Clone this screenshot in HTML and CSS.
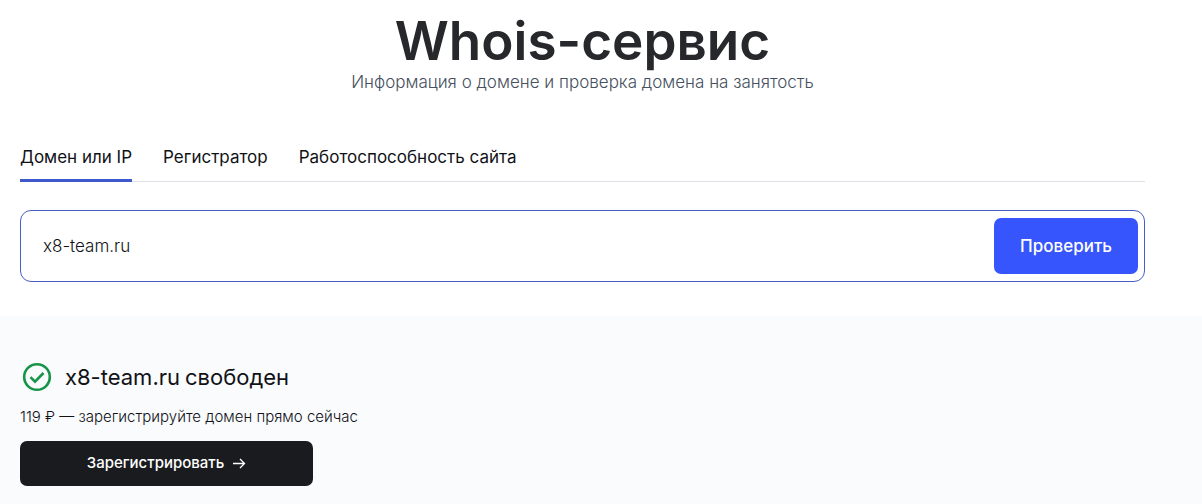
FILE: index.html
```html
<!DOCTYPE html>
<html lang="ru">
<head>
    <meta charset="UTF-8">
    <meta name="viewport" content="width=device-width, initial-scale=1.0">
    <title>Whois-сервис</title>
    <link rel="stylesheet" href="styles.css">
</head>
<body>
    <header class="intro">
        <h1>Whois-сервис</h1>
        <p>Информация о домене и проверка домена на занятость</p>
    </header>
    <main>
        <section class="lookup">
            <nav class="tabs">
                <a href="#domain" class="tab active">Домен или IP</a>
                <a href="#registrar" class="tab">Регистратор</a>
                <a href="#status" class="tab">Работоспособность сайта</a>
            </nav>
            <form class="search">
                <input type="text" class="search-input" name="domain" value="x8-team.ru" aria-label="Домен или IP">
                <button type="submit" class="search-button">Проверить</button>
            </form>
        </section>
        <section class="result">
            <h2 class="result-title">
                <svg class="icon-check" viewBox="0 0 30 30" fill="none" stroke="currentColor" stroke-width="2.6">
                    <circle cx="15" cy="15" r="12.8"/>
                    <path d="M8.500 15.200l4.500 4.500L21.500 11"/>
                </svg>
                <span>x8-team.ru</span>
                <span class="result-state">свободен</span>
            </h2>
            <p class="result-price">119 ₽ — зарегистрируйте домен прямо сейчас</p>
            <button type="button" class="register">
                Зарегистрировать
                <svg class="icon-arrow" viewBox="0 0 14 14" fill="none" stroke="currentColor" stroke-width="1.300">
                    <path d="M1 7.500h11.500M8 3l4.500 4.500L8 12"/>
                </svg>
            </button>
        </section>
    </main>
</body>
</html>
```
FILE: styles.css
```css
* {
    box-sizing: border-box;
}

body {
    margin: 0;
    min-height: 100vh;
    display: flex;
    flex-direction: column;
    background-color: #fff;
    color: #111216;
    font-family: Inter, "Liberation Sans", sans-serif;
}

h1, h2, p {
    margin: 0;
    font-weight: 400;
}

main {
    flex: 1;
    display: flex;
    flex-direction: column;
}

.intro {
    padding: 10px 57px 0 20px;
    text-align: center;
}

.intro h1 {
    font-size: 53px;
    line-height: 62px;
    font-weight: 600;
    color: #27282b;
}

.intro p {
    font-size: 17px;
    line-height: 20px;
    font-weight: 300;
    color: #465060;
}

.lookup {
    padding: 44px 57px 34px 20px;
}

.tabs {
    display: flex;
    gap: 31px;
    border-bottom: 1px solid #dfe0e5;
}

.tab {
    padding: 9px 0 10px;
    margin-bottom: -1px;
    border-bottom: 3px solid transparent;
    font-size: 17px;
    line-height: 24px;
    color: inherit;
    text-decoration: none;
}

.tab.active {
    border-bottom-color: #3f58cc;
}

.search {
    display: flex;
    margin-top: 28px;
    padding: 7px 6px 7px 22px;
    border: 1px solid #4a5cc5;
    border-radius: 11px;
}

.search-input {
    flex: 1;
    min-width: 0;
    padding: 0;
    border: 0;
    outline: 0;
    background: none;
    color: inherit;
    font: inherit;
    font-size: 17px;
    font-weight: 300;
}

.search-button {
    height: 56px;
    padding: 0 26px;
    border: 0;
    border-radius: 7px;
    background-color: #3655fd;
    color: #fff;
    font: inherit;
    font-size: 17px;
    font-weight: 500;
    cursor: pointer;
}

.result {
    flex: 1;
    padding: 45px 20px 18px;
    background-color: #f9fbfd;
}

.result-title {
    display: flex;
    align-items: center;
    gap: 5px;
    font-size: 22px;
    line-height: 32px;
}

.icon-check {
    width: 30px;
    height: 30px;
    margin: 0 8px 0 2px;
    color: #169447;
}

.result-price {
    margin-top: 14px;
    font-size: 15px;
    line-height: 20px;
    font-weight: 300;
}

.register {
    display: flex;
    align-items: center;
    justify-content: center;
    gap: 8px;
    width: 293px;
    height: 45px;
    margin-top: 14px;
    padding: 0 0 2px;
    border: 0;
    border-radius: 7px;
    background-color: #1a1b1f;
    color: #fff;
    font: inherit;
    font-size: 15px;
    font-weight: 500;
    cursor: pointer;
}

.icon-arrow {
    width: 14px;
    height: 14px;
}
```
